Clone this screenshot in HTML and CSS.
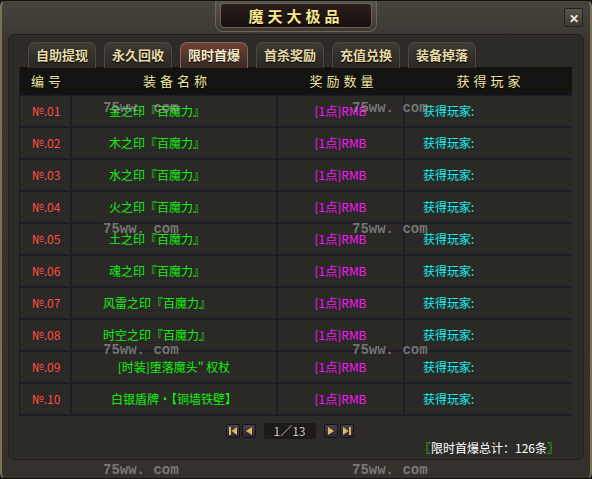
FILE: index.html
```html
<!DOCTYPE html>
<html lang="zh-CN">
<head>
    <meta charset="UTF-8">
    <title>魔天大极品</title>
    <link rel="stylesheet" href="styles.css">
</head>
<body>
    <div class="window">
        <div class="titlebar">
            <div class="title-frame">
                <div class="title-plate">魔天大极品</div>
            </div>
            <div class="close">&#x2715;</div>
        </div>
        <div class="panel">
            <div class="tabs">
                <div class="tab">自助提现</div>
                <div class="tab">永久回收</div>
                <div class="tab active">限时首爆</div>
                <div class="tab">首杀奖励</div>
                <div class="tab">充值兑换</div>
                <div class="tab">装备掉落</div>
            </div>
            <div class="table">
                <div class="thead">
                    <div class="c1">编号</div>
                    <div class="c2">装备名称</div>
                    <div class="c3">奖励数量</div>
                    <div class="c4">获得玩家</div>
                </div>
                <div class="row">
                    <div class="c1 no">№.01</div>
                    <div class="c2 name shift">金之印『百魔力』</div>
                    <div class="c3 prize">[1点]RMB</div>
                    <div class="c4 player">获得玩家:</div>
                </div>
                <div class="row">
                    <div class="c1 no">№.02</div>
                    <div class="c2 name shift">木之印『百魔力』</div>
                    <div class="c3 prize">[1点]RMB</div>
                    <div class="c4 player">获得玩家:</div>
                </div>
                <div class="row">
                    <div class="c1 no">№.03</div>
                    <div class="c2 name shift">水之印『百魔力』</div>
                    <div class="c3 prize">[1点]RMB</div>
                    <div class="c4 player">获得玩家:</div>
                </div>
                <div class="row">
                    <div class="c1 no">№.04</div>
                    <div class="c2 name shift">火之印『百魔力』</div>
                    <div class="c3 prize">[1点]RMB</div>
                    <div class="c4 player">获得玩家:</div>
                </div>
                <div class="row">
                    <div class="c1 no">№.05</div>
                    <div class="c2 name shift">土之印『百魔力』</div>
                    <div class="c3 prize">[1点]RMB</div>
                    <div class="c4 player">获得玩家:</div>
                </div>
                <div class="row">
                    <div class="c1 no">№.06</div>
                    <div class="c2 name shift">魂之印『百魔力』</div>
                    <div class="c3 prize">[1点]RMB</div>
                    <div class="c4 player">获得玩家:</div>
                </div>
                <div class="row">
                    <div class="c1 no">№.07</div>
                    <div class="c2 name shift">风雷之印『百魔力』</div>
                    <div class="c3 prize">[1点]RMB</div>
                    <div class="c4 player">获得玩家:</div>
                </div>
                <div class="row">
                    <div class="c1 no">№.08</div>
                    <div class="c2 name shift">时空之印『百魔力』</div>
                    <div class="c3 prize">[1点]RMB</div>
                    <div class="c4 player">获得玩家:</div>
                </div>
                <div class="row">
                    <div class="c1 no">№.09</div>
                    <div class="c2 name">[时装]堕落魔头" 权杖</div>
                    <div class="c3 prize">[1点]RMB</div>
                    <div class="c4 player">获得玩家:</div>
                </div>
                <div class="row">
                    <div class="c1 no">№.10</div>
                    <div class="c2 name">白银盾牌·【铜墙铁壁】</div>
                    <div class="c3 prize">[1点]RMB</div>
                    <div class="c4 player">获得玩家:</div>
                </div>
            </div>
            <div class="pager">
                <div class="pbtn"><svg width="8" height="8" viewBox="0 0 8 8"><rect x="0" y="0" width="2" height="8" fill="#d6b866"/><path d="M8 0 L2.5 4 L8 8 Z" fill="#d6b866"/></svg></div>
                <div class="pbtn"><svg width="8" height="8" viewBox="0 0 8 8"><path d="M7 0 L1 4 L7 8 Z" fill="#d6b866"/></svg></div>
                <div class="page">1／13</div>
                <div class="pbtn"><svg width="8" height="8" viewBox="0 0 8 8"><path d="M1 0 L7 4 L1 8 Z" fill="#d6b866"/></svg></div>
                <div class="pbtn"><svg width="8" height="8" viewBox="0 0 8 8"><path d="M0 0 L5.5 4 L0 8 Z" fill="#d6b866"/><rect x="6" y="0" width="2" height="8" fill="#d6b866"/></svg></div>
            </div>
            <div class="total"><span class="br">〖</span>限时首爆总计：126条<span class="br">〗</span></div>
        </div>
        <div class="marks">
            <span class="mark m1">75ww. com</span>
            <span class="mark m2">75ww. com</span>
            <span class="mark m3">75ww. com</span>
            <span class="mark m4">75ww. com</span>
            <span class="mark m5">75ww. com</span>
            <span class="mark m6">75ww. com</span>
            <span class="mark m7">75ww. com</span>
            <span class="mark m8">75ww. com</span>
        </div>
    </div>
</body>
</html>
```

FILE: styles.css
```css
body {
    margin: 0;
    padding: 0;
    background: #1a1816;
    font-family: "Noto Sans CJK SC", sans-serif;
}
.window {
    position: relative;
    width: 592px;
    height: 479px;
    box-sizing: border-box;
    background: linear-gradient(to bottom, #48443e, #3a3732 40px, #34312c);
    border: 1px solid #15130f;
    border-left: 2px solid #7d7059;
    border-right: 2px solid #7d7059;
    border-radius: 6px;
    overflow: hidden;
}
.titlebar {
    height: 33px;
    display: flex;
    justify-content: center;
    align-items: flex-start;
    position: relative;
}
.title-frame {
    padding: 2px 4px 3px;
    background: linear-gradient(to bottom, #5a544a, #3c3832);
    border: 1px solid #6c6456;
    border-top: none;
    border-radius: 0 0 8px 8px;
}
.title-plate {
    width: 150px;
    height: 23px;
    line-height: 23px;
    text-align: center;
    background: linear-gradient(to bottom, #2a1f1c, #180f0e);
    border: 1px solid #6e6354;
    border-radius: 4px;
    color: #f7e98e;
    font-size: 15px;
    font-weight: bold;
    letter-spacing: 4px;
    text-shadow: 0 1px 1px #000;
}
.close {
    position: absolute;
    right: 7px;
    top: 7px;
    width: 17px;
    height: 17px;
    line-height: 17px;
    text-align: center;
    background: linear-gradient(to bottom, #5a554c, #3c3832);
    border: 1px solid #26221d;
    border-radius: 2px;
    color: #eee8d8;
    font-size: 12px;
    font-weight: bold;
}
.panel {
    margin: 0 6px;
    height: 426px;
    box-sizing: border-box;
    background: #2d2b27;
    border: 1px solid #22201c;
    border-radius: 6px;
    padding: 7px 11px 0 10px;
}
.tabs {
    display: flex;
    gap: 8px;
    margin-left: 9px;
    height: 25px;
}
.tab {
    width: 68px;
    height: 26px;
    box-sizing: border-box;
    line-height: 24px;
    text-align: center;
    color: #e6dba6;
    font-size: 13px;
    font-weight: bold;
    background: linear-gradient(to bottom, #3e3a34, #2a2722);
    border: 1px solid #4e4740;
    border-bottom: none;
    border-radius: 7px 7px 0 0;
    text-shadow: 0 1px 1px #000;
}
.tab.active {
    background: linear-gradient(to bottom, #6e4236, #3a2a24);
    border-color: #8b6454;
    color: #f4ecc8;
}
.table {
    width: 553px;
    background: #2a2925;
    border-left: 1px solid #1d1b28;
    box-sizing: border-box;
}
.thead {
    display: flex;
    height: 29px;
    background: #141311;
    border-bottom: 1px solid #1d1b2e;
    box-sizing: border-box;
    color: #f2e7a2;
    font-size: 13px;
    letter-spacing: 4px;
    line-height: 28px;
    text-shadow: 0 1px 1px #000;
}
.thead > div {
    text-align: center;
    padding-left: 4px;
}
.row {
    display: flex;
    height: 32px;
    box-sizing: border-box;
    border-bottom: 2px solid #1d1b2a;
    font-size: 12px;
    line-height: 30px;
}
.c1 {
    width: 52px;
    box-sizing: border-box;
}
.c2 {
    width: 206px;
    box-sizing: border-box;
}
.c3 {
    width: 127px;
    box-sizing: border-box;
}
.c4 {
    flex: 1;
    box-sizing: border-box;
}
.row .c1, .row .c2, .row .c3 {
    border-right: 2px solid #1d1b2a;
}
.no {
    color: #ff4a4a;
    text-align: center;
    padding-left: 2px;
}
.name {
    color: #14f014;
    text-align: center;
    white-space: nowrap;
}
.name.shift {
    padding-right: 34px;
}
.prize {
    color: #ff14ff;
    text-align: center;
}
.player {
    color: #14f0f0;
    padding-left: 18px;
}
.pager {
    display: flex;
    justify-content: center;
    align-items: center;
    gap: 2px;
    margin-top: 7px;
    height: 16px;
    padding-right: 12px;
}
.pbtn {
    width: 14px;
    height: 14px;
    box-sizing: border-box;
    display: flex;
    justify-content: center;
    align-items: center;
    background: linear-gradient(to bottom, #4a3e4a, #2c2430);
    border: 1px solid #18131a;
    border-radius: 2px;
}
.page {
    width: 52px;
    height: 16px;
    line-height: 16px;
    margin: 0 6px;
    background: #1d1b19;
    border-radius: 2px;
    text-align: center;
    color: #c9c1aa;
    font-size: 12px;
}
.total {
    text-align: right;
    margin-top: 1px;
    padding-right: 13px;
    color: #ffffff;
    font-size: 12px;
    line-height: 16px;
}
.br {
    color: #14f014;
}
.marks .mark {
    position: absolute;
    font-family: "Liberation Mono", monospace;
    font-size: 14px;
    font-weight: bold;
    color: rgba(170, 170, 170, 0.6);
    white-space: nowrap;
    line-height: 14px;
}
.m1 { left: 101px; top: 100px; }
.m2 { left: 350px; top: 100px; }
.m3 { left: 101px; top: 221px; }
.m4 { left: 350px; top: 221px; }
.m5 { left: 101px; top: 342px; }
.m6 { left: 350px; top: 342px; }
.m7 { left: 101px; top: 462px; }
.m8 { left: 350px; top: 462px; }
```
